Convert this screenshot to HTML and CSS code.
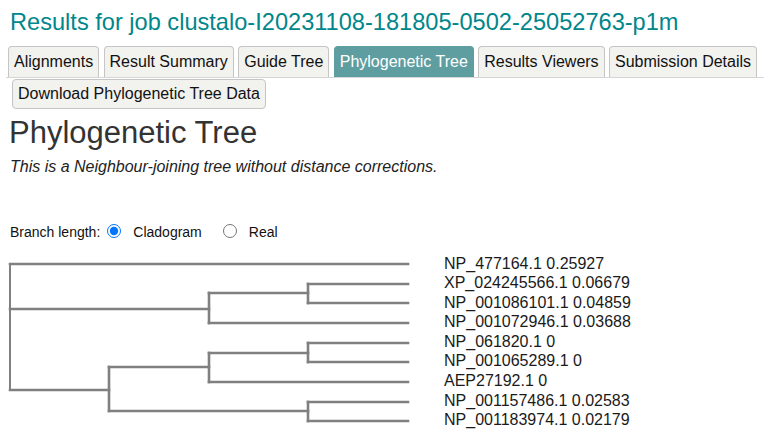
FILE: index.html
```html
<!DOCTYPE html>
<html>
<head>
<meta charset="utf-8">
<link rel="stylesheet" href="styles.css">
</head>
<body>
<div class="page">
  <h1 class="title">Results for job clustalo-I20231108-181805-0502-25052763-p1m</h1>
  <ul class="tabs">
    <li class="tab">Alignments</li>
    <li class="tab">Result Summary</li>
    <li class="tab">Guide Tree</li>
    <li class="tab active">Phylogenetic Tree</li>
    <li class="tab">Results Viewers</li>
    <li class="tab">Submission Details</li>
  </ul>
  <div class="actions"><span class="btn">Download Phylogenetic Tree Data</span></div>
  <h2 class="heading">Phylogenetic Tree</h2>
  <p class="desc">This is a Neighbour-joining tree without distance corrections.</p>
  <div class="branch">
    <span class="lbl">Branch length:</span>
    <input type="radio" name="bl" class="radio first" checked>
    <span class="opt">Cladogram</span>
    <input type="radio" name="bl" class="radio">
    <span class="opt">Real</span>
  </div>
</div>
<svg class="tree" width="764" height="198" viewBox="0 0 764 198">
  <g class="edges" fill="none" stroke="#808080" stroke-width="2.6" stroke-linecap="square">
    <!-- root -->
    <line x1="10" y1="24" x2="10" y2="150" stroke-width="2"/>
    <line x1="10" y1="24" x2="408" y2="24"/>
    <line x1="10" y1="69" x2="209" y2="69"/>
    <line x1="10" y1="150" x2="109" y2="150"/>
    <!-- node A -->
    <line x1="209" y1="53" x2="209" y2="83"/>
    <line x1="209" y1="53" x2="308" y2="53"/>
    <line x1="209" y1="83" x2="408" y2="83"/>
    <line x1="308" y1="44" x2="308" y2="63"/>
    <line x1="308" y1="44" x2="408" y2="44"/>
    <line x1="308" y1="63" x2="408" y2="63"/>
    <!-- node B -->
    <line x1="109" y1="127" x2="109" y2="171"/>
    <line x1="109" y1="127" x2="209" y2="127"/>
    <line x1="109" y1="171" x2="308" y2="171"/>
    <line x1="209" y1="113" x2="209" y2="142"/>
    <line x1="209" y1="113" x2="308" y2="113"/>
    <line x1="209" y1="142" x2="408" y2="142"/>
    <line x1="308" y1="103" x2="308" y2="122"/>
    <line x1="308" y1="103" x2="408" y2="103"/>
    <line x1="308" y1="122" x2="408" y2="122"/>
    <line x1="308" y1="162" x2="308" y2="181"/>
    <line x1="308" y1="162" x2="408" y2="162"/>
    <line x1="308" y1="181" x2="408" y2="181"/>
  </g>
  <g class="leaves">
    <text x="444" y="28.5">NP_477164.1 0.25927</text>
    <text x="444" y="48.3">XP_024245566.1 0.06679</text>
    <text x="444" y="67.5">NP_001086101.1 0.04859</text>
    <text x="444" y="87">NP_001072946.1 0.03688</text>
    <text x="444" y="107">NP_061820.1 0</text>
    <text x="444" y="126.3">NP_001065289.1 0</text>
    <text x="444" y="146">AEP27192.1 0</text>
    <text x="444" y="165.7">NP_001157486.1 0.02583</text>
    <text x="444" y="185">NP_001183974.1 0.02179</text>
  </g>
</svg>
</body>
</html>
```
FILE: styles.css
```css
html, body {
  margin: 0;
  padding: 0;
  background: #ffffff;
}
body {
  font-family: "Liberation Sans", Arial, sans-serif;
  color: #222;
}
.page {
  padding-left: 9px;
}
.title {
  margin: 9px 0 0 1px;
  font-size: 23.6px;
  line-height: 27px;
  font-weight: normal;
  color: #00868b;
}
.tabs {
  list-style: none;
  margin: 10px 0 0 -3px;
  padding: 0 0 0 2px;
  display: flex;
  gap: 4.4px;
  border-bottom: 1px solid #d6d6d6;
}
.tab {
  font-size: 16px;
  line-height: 18px;
  padding: 6px 5px 6px;
  border: 1px solid #c5c5c5;
  border-bottom: none;
  border-radius: 4px 4px 0 0;
  background: #f2f2ee;
  color: #111;
}
.tab.active {
  background: #5f9ea0;
  border-color: #5f9ea0;
  color: #ffffff;
}
.actions {
  margin: 1px 0 0 3px;
  display: flex;
}
.btn {
  font-size: 16px;
  line-height: 18px;
  padding: 5px 5px;
  border: 1px solid #c5c5c5;
  border-radius: 4px;
  background: #f2f2ee;
  color: #111;
}
.heading {
  margin: 6px 0 0 0;
  font-size: 31px;
  line-height: 35px;
  font-weight: normal;
  color: #333;
}
.desc {
  margin: 8px 0 0 1px;
  font-size: 16px;
  line-height: 18px;
  font-style: italic;
  color: #222;
}
.branch {
  margin-top: 48px;
  display: flex;
  align-items: center;
  height: 16px;
  font-size: 14px;
  line-height: 16px;
  color: #111;
}
.lbl {
  margin-left: 1px;
}
.radio {
  width: 14px;
  height: 14px;
  margin: -2px 12px 0 21px;
}
.radio.first {
  margin-left: 7px;
}
.tree {
  display: block;
}
.leaves text {
  font-family: "Liberation Sans", Arial, sans-serif;
  font-size: 16px;
  fill: #1a1a1a;
}
```
